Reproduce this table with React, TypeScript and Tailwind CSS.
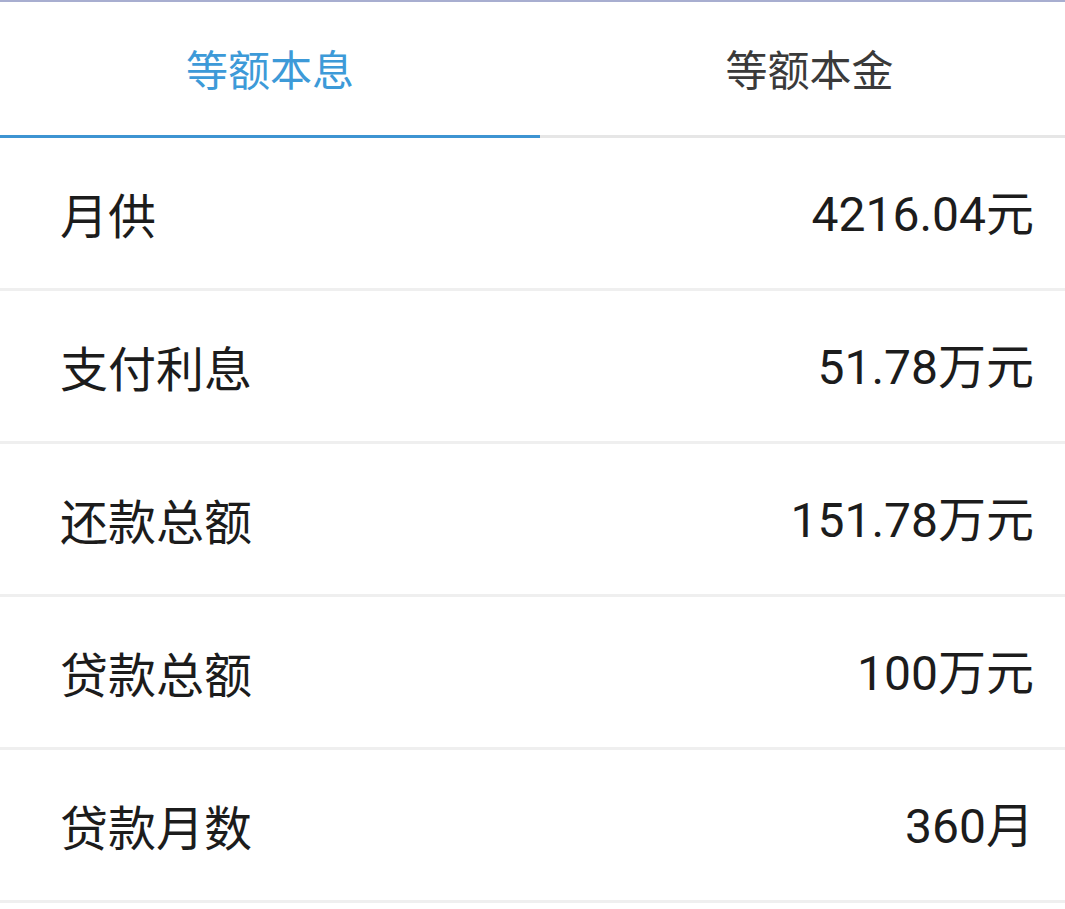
import React from "react";

const rows = [
  ["月供", "4216.04元"],
  ["支付利息", "51.78万元"],
  ["还款总额", "151.78万元"],
  ["贷款总额", "100万元"],
  ["贷款月数", "360月"],
];

export default function App() {
  return (
    <div
      className="w-[1065px] h-[909px] bg-white overflow-hidden"
      style={{ fontFamily: '"Noto Sans CJK SC", "Noto Sans", sans-serif' }}
    >
      <div className="h-[2px] bg-[#a8aed0]" />
      <div className="flex h-[136px] relative border-b-[3px] border-[#e6e6e6]">
        <div className="w-[540px] flex items-center justify-center text-[42px] text-[#3d9ad8] relative">
          <span className="-mt-[2px]">等额本息</span>
          <div className="absolute left-0 right-0 -bottom-[3px] h-[3px] bg-[#3d94d2]" />
        </div>
        <div className="flex-1 flex items-center justify-center text-[42px] text-[#3a3a3a]">
          <span className="-mt-[2px] ml-[14px]">等额本金</span>
        </div>
      </div>
      <div className="flex flex-col">
        {rows.map(([k, v]) => (
          <div
            key={k}
            className="h-[153px] flex items-center justify-between pl-[60px] pr-[31px] border-b-[3px] border-[#efefef]"
          >
            <span className="text-[48px] text-[#1c1c1c]">{k}</span>
            <span
              className="text-[48px] text-[#1c1c1c] pt-[4px]"
              style={{ fontFamily: 'Roboto, "Noto Sans CJK SC", sans-serif' }}
            >
              {v}
            </span>
          </div>
        ))}
      </div>
    </div>
  );
}
